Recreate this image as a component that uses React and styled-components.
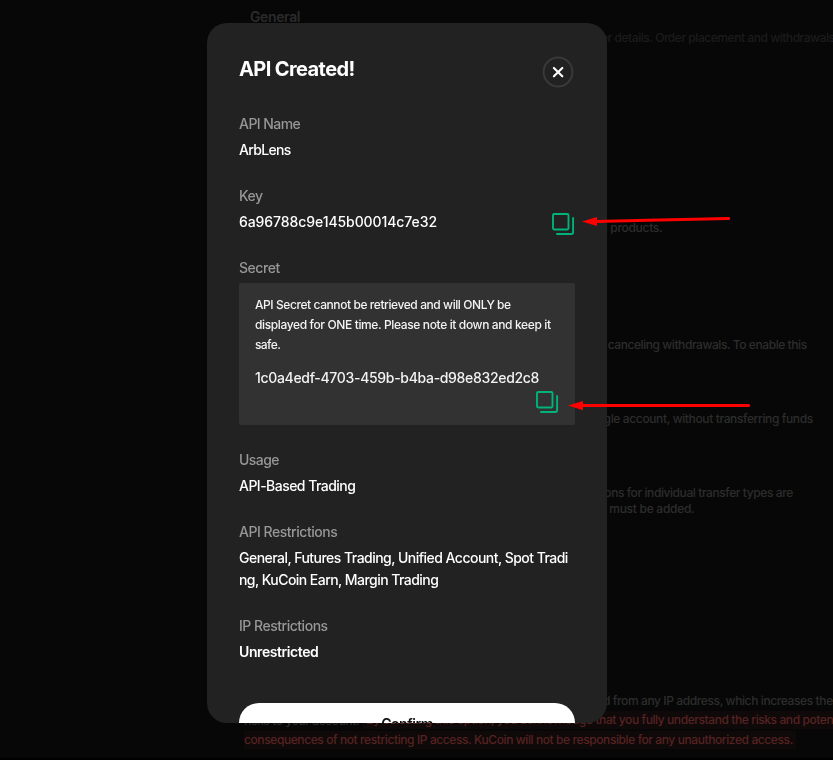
import React from "react";

// style
import styled, { createGlobalStyle } from "styled-components";

const backgroundRows = [
  { text: "General", left: 250, top: 7, height: 20, size: 14, weight: 600, spacing: -0.38, color: "#2b2b2b" },
  { text: "er details. Order placement and withdrawals,", left: 601, top: 3, spacing: -0.45, color: "#1c1c1c" },
  { text: "n products.", left: 600.5, top: 174, spacing: -0.3 },
  { text: "canceling withdrawals. To enable this", left: 607.7, top: 101, spacing: -0.43 },
  { text: "gle account, without transferring funds", left: 603.6, top: 58, spacing: -0.37 },
  { text: "ons for individual transfer types are", left: 604.3, top: 58, spacing: -0.41 },
  { text: "must be added.", left: 609.3, top: 0, spacing: -0.28 },
  { text: "d from any IP address, which increases the", left: 603, top: 175, height: 18, spacing: -0.39 },
];

const CopyButton = () => (
  <IconButton aria-label="Copy">
    <svg width="24" height="24" viewBox="0 0 24 24" fill="none" stroke="#01b27a" strokeWidth="1.9">
      <rect x="2" y="3" width="15.5" height="15.5" rx="1.2" />
      <path d="M22.1 6.3V21.3Q22.1 23 20.4 23H5.2" />
    </svg>
  </IconButton>
);

const CloseButton = () => (
  <IconButton aria-label="Close">
    <svg width="32" height="32" viewBox="0 0 32 32" fill="none">
      <circle cx="16" cy="16" r="14.4" stroke="#393939" strokeWidth="2" />
      <path d="M11.9 11.9L20.3 20.3M20.3 11.9L11.9 20.3" stroke="#fff" strokeWidth="2.1" strokeLinecap="round" />
    </svg>
  </IconButton>
);

const App = () => {
  return (
    <React.Fragment>
      <GlobalStyle />
      <Page>
        {backgroundRows.map((row) => (
          <BackRow key={row.text} {...toRowProps(row)}>
            {row.text}
          </BackRow>
        ))}
        <RiskText>
          <RiskLine>
            <RiskPlain>risks to your account.</RiskPlain>
            <RiskMark>
              <Tracked $spacing={-0.36}>By selecting this option, you acknowledge</Tracked>
              <Tracked $spacing={-0.41}> that you fully understand the risks and potential</Tracked>
            </RiskMark>
          </RiskLine>
          <RiskLine>
            <RiskMark $end>
              consequences of not restricting IP access. KuCoin will not be responsible for any unauthorized access.
            </RiskMark>
          </RiskLine>
        </RiskText>
        <PageFoot />
      </Page>

      <Overlay>
        <Modal>
          <Header>
            <Title>API Created!</Title>
            <CloseButton />
          </Header>

          <Field>
            <Label $spacing={-0.55}>API Name</Label>
            <Value $spacing={-0.65}>ArbLens</Value>
          </Field>

          <Field>
            <Label $spacing={-0.5}>Key</Label>
            <ValueRow>
              <Value $spacing={-0.08}>6a96788c9e145b00014c7e32</Value>
              <CopyButton />
            </ValueRow>
          </Field>

          <Field>
            <Label $spacing={-0.45}>Secret</Label>
            <SecretBox>
              <Notice $spacing={-0.42}>API Secret cannot be retrieved and will ONLY be</Notice>
              <Notice $spacing={-0.37}>displayed for ONE time. Please note it down and keep it</Notice>
              <Notice $spacing={-0.6}>safe.</Notice>
              <SecretValue $spacing={-0.32}>1c0a4edf-4703-459b-b4ba-d98e832ed2c8</SecretValue>
              <SecretAction>
                <CopyButton />
              </SecretAction>
            </SecretBox>
          </Field>

          <Field>
            <Label $spacing={-0.55}>Usage</Label>
            <Value $spacing={-0.53}>API-Based Trading</Value>
          </Field>

          <Field>
            <Label $spacing={-0.47}>API Restrictions</Label>
            <Value $spacing={-0.53}>General, Futures Trading, Unified Account, Spot Tradi</Value>
            <Value $spacing={-0.55}>ng, KuCoin Earn, Margin Trading</Value>
          </Field>

          <Field>
            <Label $spacing={-0.48}>IP Restrictions</Label>
            <Value $bold $spacing={-0.41}>
              Unrestricted
            </Value>
          </Field>

          <ConfirmButton>Confirm</ConfirmButton>
        </Modal>
      </Overlay>

      {/* red pointers to the copy buttons */}
      <Pointers width="833" height="760" viewBox="0 0 833 760">
        <path d="M595 221.4L728.6 218.6" />
        <polygon points="582,221.6 597,217 597,226" />
        <path d="M581 405.5H748.6" />
        <polygon points="568,405.6 583,401 583,410.3" />
      </Pointers>
    </React.Fragment>
  );
};

const toRowProps = ({ left, top, height = 16, size = 12, weight = 500, spacing, color = "#2d2d2d" }) => ({
  $left: left,
  $top: top,
  $height: height,
  $size: size,
  $weight: weight,
  $spacing: spacing,
  $color: color,
});

const GlobalStyle = createGlobalStyle`
  * {
    box-sizing: border-box;
  }

  body {
    margin: 0;
    background-color: #070707;
    font-family: Inter, "Liberation Sans", sans-serif;
    overflow: hidden;
  }
`;

const Page = styled.div`
  display: flex;
  flex-direction: column;
  width: 833px;
  height: 760px;
  overflow: hidden;
  background-color: #070707;
`;

const BackRow = styled.div`
  flex: none;
  margin-top: ${(props) => props.$top}px;
  padding-left: ${(props) => props.$left}px;
  line-height: ${(props) => props.$height}px;
  font-size: ${(props) => props.$size}px;
  font-weight: ${(props) => props.$weight};
  letter-spacing: ${(props) => props.$spacing}px;
  color: ${(props) => props.$color};
  white-space: nowrap;
`;

const RiskText = styled.div`
  padding-left: 244px;
  font-size: 12px;
  font-weight: 500;
  letter-spacing: -0.405px;
`;

const RiskLine = styled.div`
  display: flex;
  align-items: center;
  height: 20px;
  white-space: pre;
`;

const RiskPlain = styled.span`
  flex: none;
  width: 119px;
  color: #2d2d2d;
`;

const RiskMark = styled.span`
  height: 18px;
  padding-left: ${(props) => (props.$end ? 0 : 3)}px;
  padding-right: ${(props) => (props.$end ? 3 : 0)}px;
  line-height: 18px;
  background-color: #100909;
  color: #562322;
`;

const Tracked = styled.span`
  letter-spacing: ${(props) => props.$spacing}px;
`;

const PageFoot = styled.div`
  height: 2px;
  margin-top: auto;
  background-color: #000;
`;

const Overlay = styled.div`
  position: fixed;
  inset: 0;
  display: flex;
  align-items: flex-start;
  padding: 23px 0 0 207px;
`;

const Modal = styled.div`
  width: 400px;
  height: 700px;
  padding: 32px;
  border-radius: 20px;
  background-color: #222222;
  overflow: hidden;
`;

const Header = styled.div`
  display: flex;
  justify-content: space-between;
  align-items: flex-start;
  height: 58px;

  button {
    margin: 1px 1px 0 0;
  }
`;

const Title = styled.h1`
  margin: 0;
  font-size: 20px;
  font-weight: 650;
  line-height: 28px;
  letter-spacing: -0.6px;
  color: #fff;
`;

const IconButton = styled.button`
  display: block;
  flex: none;
  padding: 0;
  border: 0;
  background: none;

  svg {
    display: block;
  }
`;

const Field = styled.div`
  margin-bottom: 24px;
`;

const Label = styled.div`
  margin-bottom: 4px;
  font-size: 14px;
  font-weight: 450;
  line-height: 22px;
  letter-spacing: ${(props) => props.$spacing}px;
  color: #979797;
`;

const Value = styled.div`
  font-size: 14px;
  font-weight: ${(props) => (props.$bold ? 600 : 500)};
  line-height: 22px;
  letter-spacing: ${(props) => props.$spacing}px;
  color: #fff;
  white-space: nowrap;
`;

const ValueRow = styled.div`
  display: flex;
  justify-content: space-between;
  height: 22px;
`;

const SecretBox = styled.div`
  padding: 12px 16px;
  border-radius: 2px;
  background-color: #323232;
`;

const Notice = styled.div`
  font-size: 12px;
  font-weight: 500;
  line-height: 20px;
  letter-spacing: ${(props) => props.$spacing}px;
  color: #f3f3f3;
  white-space: nowrap;
`;

const SecretValue = styled(Value)`
  margin-top: 12px;
  color: #f3f3f3;
`;

const SecretAction = styled.div`
  display: flex;
  justify-content: flex-end;
`;

const ConfirmButton = styled.button`
  display: block;
  width: 100%;
  height: 40px;
  margin-top: 40px;
  padding: 0;
  border: 0;
  border-radius: 20px;
  background-color: #fff;
  color: #111;
  font-family: inherit;
  font-size: 14px;
  font-weight: 600;
  letter-spacing: -0.45px;
`;

const Pointers = styled.svg`
  position: fixed;
  top: 0;
  left: 0;
  pointer-events: none;

  path {
    stroke: #fe0000;
    stroke-width: 3;
    stroke-linecap: round;
  }

  polygon {
    fill: #fe0000;
  }
`;

export default App;
